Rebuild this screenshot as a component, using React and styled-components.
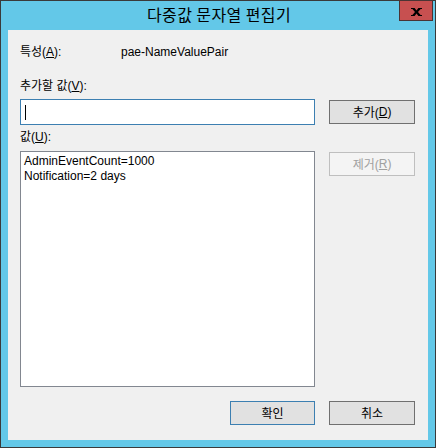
import styled, { createGlobalStyle } from "styled-components";

const GlobalStyle = createGlobalStyle`
  html, body {
    margin: 0;
    padding: 0;
    background: #ffffff;
  }
`;

const Frame = styled.div`
  box-sizing: border-box;
  width: 436px;
  height: 448px;
  border: 1px solid #3a3a3a;
  background-color: #63c8e8;
  display: flex;
  flex-direction: column;
  padding: 0 7px 7px 7px;
  font-family: "Liberation Sans", "Noto Sans CJK KR", sans-serif;
  font-size: 12px;
  color: #000;
`;

const TitleBar = styled.div`
  height: 29px;
  display: grid;
  grid-template-columns: 1fr auto 1fr;
  align-items: start;
  margin-right: -5px;
`;

const Title = styled.div`
  grid-column: 2;
  font-family: "Noto Sans CJK KR", sans-serif;
  font-size: 16px;
  letter-spacing: 0.4px;
  line-height: 27px;
  color: #000;
  padding-right: 3px;
`;

const CloseButton = styled.div`
  grid-column: 3;
  justify-self: end;
  box-sizing: border-box;
  width: 34px;
  height: 21px;
  margin-top: -1px;
  background-color: #c75050;
  border: 1px solid #4a3434;
  display: flex;
  align-items: center;
  justify-content: center;

  svg {
    width: 11px;
    height: 8px;
    margin-top: 2px;
  }
`;

const Client = styled.div`
  flex: 1;
  background-color: #f0f0f0;
  padding: 15px 13px 15px 12px;
  display: flex;
  flex-direction: column;
`;

const Line = styled.div`
  display: flex;
  align-items: center;
  line-height: 15px;
  margin-top: ${(p) => p.$top || 0}px;
`;

const Label = styled.div`
  width: ${(p) => (p.$width ? `${p.$width}px` : "auto")};
  flex: none;
`;

const Row = styled.div`
  display: flex;
  align-items: ${(p) => p.$align || "center"};
  gap: 14px;
  margin-top: ${(p) => p.$top || 0}px;
`;

const TextInput = styled.div`
  box-sizing: border-box;
  width: 295px;
  height: 26px;
  background: #ffffff;
  border: 1px solid #3c7fb1;
  display: flex;
  align-items: center;
  padding-left: 4px;
`;

const Caret = styled.div`
  width: 1px;
  height: 15px;
  background: #000;
`;

const ListBox = styled.div`
  box-sizing: border-box;
  width: 295px;
  height: 236px;
  background: #ffffff;
  border: 1px solid #828790;
  padding: 2px 3px;
  line-height: 15px;
`;

const Button = styled.div`
  box-sizing: border-box;
  width: ${(p) => p.$width || 86}px;
  height: 24px;
  flex: none;
  display: flex;
  align-items: center;
  justify-content: center;
  margin-top: ${(p) => p.$top || 0}px;
  background-color: ${(p) => (p.$disabled ? "#f4f4f4" : "#e1e1e1")};
  border: 1px solid
    ${(p) => (p.$default ? "#3c7fb1" : p.$disabled ? "#bfbfbf" : "#707070")};
  color: ${(p) => (p.$disabled ? "#a0a0a0" : "#000")};
  padding-bottom: 1px;
`;

const Footer = styled.div`
  display: flex;
  justify-content: flex-end;
  gap: 14px;
  margin-top: 14px;
`;

const U = styled.span`
  text-decoration: underline;
`;

function CloseGlyph() {
  return (
    <svg viewBox="0 0 11 8">
      <path
        d="M0 0H3.6L5.5 2.4L7.4 0H11V1H9.6L7 4L9.6 7H11V8H7.4L5.5 5.6L3.6 8H0V7H1.4L4 4L1.4 1H0Z"
        fill="#000"
      />
    </svg>
  );
}

export default function App() {
  return (
    <>
      <GlobalStyle />
      <Frame>
        <TitleBar>
          <Title>다중값 문자열 편집기</Title>
          <CloseButton>
            <CloseGlyph />
          </CloseButton>
        </TitleBar>
        <Client>
          <Line>
            <Label $width={101}>
              특성(<U>A</U>):
            </Label>
            <div>pae-NameValuePair</div>
          </Line>

          <Line $top={19}>
            <Label>
              추가할 값(<U>V</U>):
            </Label>
          </Line>
          <Row $top={5}>
            <TextInput>
              <Caret />
            </TextInput>
            <Button>
              추가(<U>D</U>)
            </Button>
          </Row>

          <Line $top={5}>
            <Label>
              값(<U>U</U>):
            </Label>
          </Line>
          <Row $top={6} $align="flex-start">
            <ListBox>
              <div>AdminEventCount=1000</div>
              <div>Notification=2 days</div>
            </ListBox>
            <Button $disabled $top={1}>
              제거(<U>R</U>)
            </Button>
          </Row>

          <Footer>
            <Button $default $width={85}>
              확인
            </Button>
            <Button>취소</Button>
          </Footer>
        </Client>
      </Frame>
    </>
  );
}
